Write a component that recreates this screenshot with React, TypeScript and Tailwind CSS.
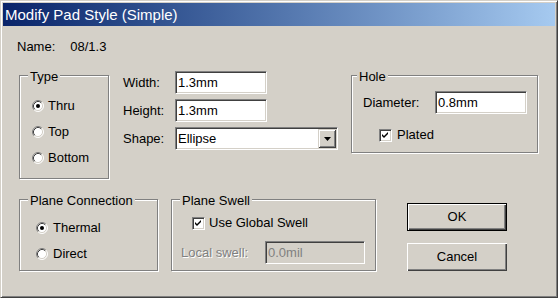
import React from "react";

const face = "bg-[#d4d0c8]";

function Radio({ checked }: { checked?: boolean }) {
  return (
    <svg width="12" height="12" viewBox="0 0 12 12" className="shrink-0">
      <circle cx="6" cy="6" r="5" fill="#fff" />
      <path d="M2.11 9.89 A5.5 5.5 0 0 1 9.89 2.11" stroke="#808080" fill="none" />
      <path d="M9.89 2.11 A5.5 5.5 0 0 1 2.11 9.89" stroke="#fff" fill="none" />
      <path d="M2.82 9.18 A4.5 4.5 0 0 1 9.18 2.82" stroke="#404040" fill="none" />
      <path d="M9.18 2.82 A4.5 4.5 0 0 1 2.82 9.18" stroke="#d4d0c8" fill="none" />
      {checked && <circle cx="6" cy="6" r="2" fill="#000" />}
    </svg>
  );
}

function Check() {
  return (
    <div className="w-[13px] h-[13px] shrink-0 bg-white border border-t-[#808080] border-l-[#808080] border-r-white border-b-white shadow-[inset_1px_1px_0_#404040,inset_-1px_-1px_0_#d4d0c8]">
      <svg width="11" height="11" viewBox="0 0 11 11">
        <path d="M2 4 L4 6 L8 2 L8 4 L4 8 L2 6 Z" fill="#000" />
      </svg>
    </div>
  );
}

function Field({ value, w, disabled }: { value: string; w: string; disabled?: boolean }) {
  return (
    <div
      className={`${w} h-[23px] flex items-center pl-[2px] border border-t-[#808080] border-l-[#808080] border-r-white border-b-white shadow-[inset_1px_1px_0_#404040,inset_-1px_-1px_0_#d4d0c8] ${
        disabled ? "bg-[#d4d0c8] text-[#808080]" : "bg-white"
      }`}
    >
      {value}
    </div>
  );
}

function Group({
  label,
  className,
  legend,
  children,
}: {
  label: string;
  className: string;
  legend: string;
  children: React.ReactNode;
}) {
  return (
    <div className={`relative shrink-0 border border-[#808080] shadow-[1px_1px_0_#fff,inset_1px_1px_0_#fff] ${className}`}>
      <span className={`absolute top-[-7px] ${legend} ${face} px-[2px] leading-[16px]`}>{label}</span>
      {children}
    </div>
  );
}

function Button({ label, isDefault }: { label: string; isDefault?: boolean }) {
  return (
    <div
      className={`w-[100px] h-[28px] flex items-center justify-center ${
        isDefault
          ? "border border-black shadow-[inset_1px_1px_0_#fff,inset_-1px_-1px_0_#404040,inset_-2px_-2px_0_#808080]"
          : "shadow-[inset_1px_1px_0_#fff,inset_-1px_-1px_0_#404040,inset_-2px_-2px_0_#808080]"
      }`}
    >
      {label}
    </div>
  );
}

export default function App() {
  return (
    <div className={`w-[558px] h-[298px] ${face} flex flex-col p-[2px] border border-t-[#d4d0c8] border-l-[#d4d0c8] border-r-[#404040] border-b-[#404040] shadow-[inset_1px_1px_0_#fff,inset_-1px_-1px_0_#808080] font-['Liberation_Sans',Arial,sans-serif] text-[13px] leading-[16px] text-black`}>
      {/* title bar */}
      <div className="h-[23px] shrink-0 flex items-center pl-[2px] bg-gradient-to-r from-[#0a246a] to-[#a6caf0] text-white text-[15px] leading-[23px]">
        Modify Pad Style (Simple)
      </div>

      {/* body */}
      <div className="flex flex-col pl-[16px]">
        <div className="mt-[13px] ml-[-2px] flex">
          <span>Name:</span>
          <span className="ml-[15px]">08/1.3</span>
        </div>

        <div className="mt-[20px] flex items-start">
          <Group label="Type" legend="left-[8px]" className="w-[90px] h-[104px]">
            <div className="pt-[17px] pl-[12px] flex flex-col">
              {["Thru", "Top", "Bottom"].map((t, i) => (
                <div key={t} className="h-[26px] flex items-center gap-[4px]">
                  <Radio checked={i === 0} />
                  <span>{t}</span>
                </div>
              ))}
            </div>
          </Group>

          <div className="ml-[14px] mt-[-4px] flex flex-col gap-[5px]">
            <div className="flex items-center">
              <span className="w-[52px]">Width:</span>
              <Field value="1.3mm" w="w-[92px]" />
            </div>
            <div className="flex items-center">
              <span className="w-[52px]">Height:</span>
              <Field value="1.3mm" w="w-[92px]" />
            </div>
            <div className="flex items-center">
              <span className="w-[52px]">Shape:</span>
              <div className="w-[163px] h-[23px] flex items-center justify-between pl-[2px] pr-[1px] bg-white border border-t-[#808080] border-l-[#808080] border-r-white border-b-white shadow-[inset_1px_1px_0_#404040,inset_-1px_-1px_0_#d4d0c8]">
                <span>Ellipse</span>
                <div className={`w-[18px] h-[19px] ${face} flex items-center justify-center shadow-[inset_1px_1px_0_#d4d0c8,inset_-1px_-1px_0_#404040,inset_2px_2px_0_#fff,inset_-2px_-2px_0_#808080]`}>
                  <svg width="7" height="4" viewBox="0 0 7 4">
                    <path d="M0 0 H7 L3.5 4 Z" fill="#000" />
                  </svg>
                </div>
              </div>
            </div>
          </div>

          <Group label="Hole" legend="left-[5px]" className="ml-[13px] w-[187px] h-[78px]">
            <div className="pt-[15px] pl-[11px] flex flex-col">
              <div className="flex items-center">
                <span className="w-[72px]">Diameter:</span>
                <Field value="0.8mm" w="w-[92px]" />
              </div>
              <div className="mt-[13px] pl-[16px] flex items-center gap-[5px]">
                <Check />
                <span>Plated</span>
              </div>
            </div>
          </Group>
        </div>

        <div className="mt-[20px] flex items-start">
          <Group label="Plane Connection" legend="left-[8px]" className="w-[139px] h-[72px]">
            <div className="pt-[15px] pl-[16px] flex flex-col">
              {["Thermal", "Direct"].map((t, i) => (
                <div key={t} className="h-[26px] flex items-center gap-[5px]">
                  <Radio checked={i === 0} />
                  <span>{t}</span>
                </div>
              ))}
            </div>
          </Group>

          <Group label="Plane Swell" legend="left-[8px]" className="ml-[13px] w-[205px] h-[72px]">
            <div className="pt-[10px] pl-[9px] flex flex-col">
              <div className="h-[26px] pl-[11px] flex items-center gap-[4px]">
                <Check />
                <span>Use Global Swell</span>
              </div>
              <div className="mt-[5px] flex items-center">
                <span className="w-[84px] text-[#808080] [text-shadow:1px_1px_0_#fff]">Local swell:</span>
                <Field value="0.0mil" w="w-[100px]" disabled />
              </div>
            </div>
          </Group>

          <div className="ml-[31px] mt-[4px] flex flex-col gap-[12px]">
            <Button label="OK" isDefault />
            <Button label="Cancel" />
          </div>
        </div>
      </div>
    </div>
  );
}
